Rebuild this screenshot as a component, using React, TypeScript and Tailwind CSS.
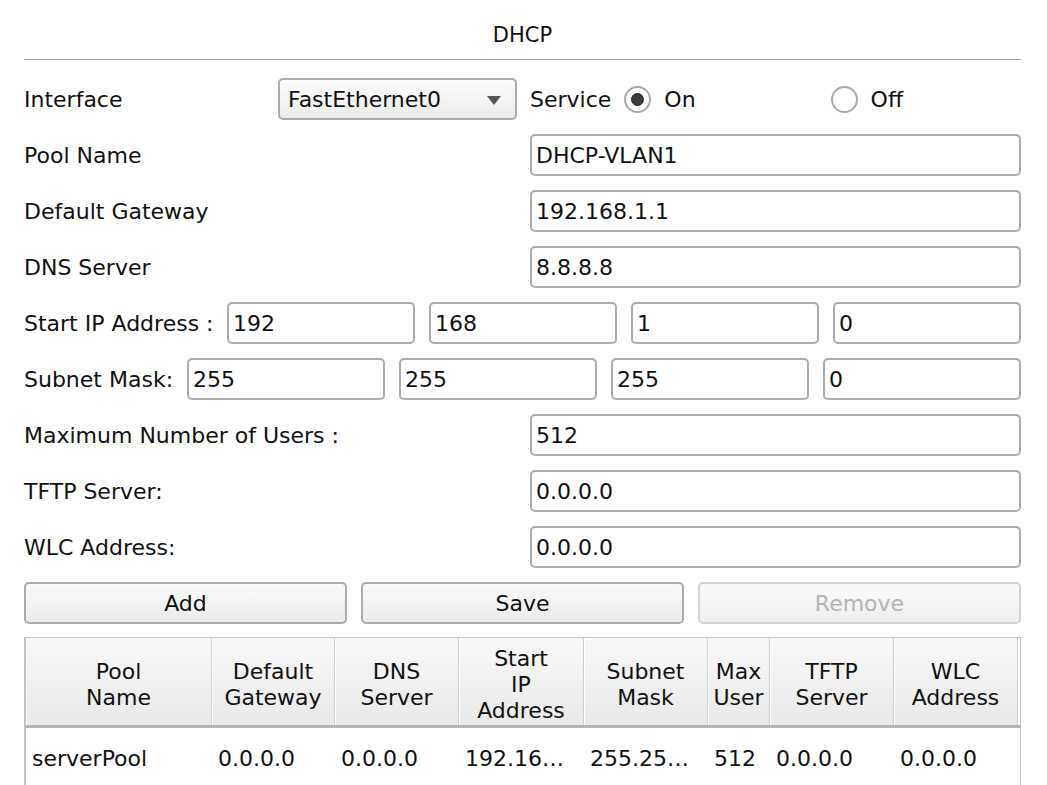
import React from "react";

const font = { fontFamily: '"DejaVu Sans", Verdana, sans-serif' };

function Field({ value, className = "" }: { value: string; className?: string }) {
  return (
    <div
      className={`h-[42px] border-2 border-[#ababab] rounded-[5px] bg-white flex items-center pl-[4px] pt-[2px] text-[#111] whitespace-nowrap overflow-hidden ${className}`}
    >
      {value}
    </div>
  );
}

function Radio({ checked }: { checked: boolean }) {
  return (
    <div className="w-[27px] h-[27px] rounded-full border-2 border-[#a9a9a9] bg-white flex items-center justify-center">
      {checked && <div className="w-[13px] h-[13px] rounded-full bg-[#3c3c3c] border border-[#222]" />}
    </div>
  );
}

function Row({ label, value }: { label: string; value: string }) {
  return (
    <div className="flex items-center h-[42px]">
      <div className="w-[506px] pt-[2px]">{label}</div>
      <Field value={value} className="flex-1" />
    </div>
  );
}

const cols = [
  { w: 186, h: ["Pool", "Name"] },
  { w: 123, h: ["Default", "Gateway"] },
  { w: 124, h: ["DNS", "Server"] },
  { w: 125, h: ["Start", "IP", "Address"] },
  { w: 124, h: ["Subnet", "Mask"] },
  { w: 62, h: ["Max", "User"] },
  { w: 124, h: ["TFTP", "Server"] },
  { w: 124, h: ["WLC", "Address"] },
];

const rowVals = ["serverPool", "0.0.0.0", "0.0.0.0", "192.16…", "255.25…", "512", "0.0.0.0", "0.0.0.0"];

export default function App() {
  return (
    <div className="w-[1047px] h-[785px] bg-white overflow-hidden text-[22px] text-[#111] leading-none pt-[1px]" style={font}>
      <div className="pl-[24px] pr-[26px]">
        <div className="h-[59px] flex items-center justify-center pt-[10px] border-b border-[#a3a3a3] text-[21px]">
          DHCP
        </div>
        <div className="mt-[18px] flex flex-col gap-[14px]">
          <div className="flex items-center h-[42px]">
            <div className="w-[254px] pt-[2px]">Interface</div>
            <div className="w-[239px] h-[42px] border-2 border-[#ababab] rounded-[5px] bg-gradient-to-b from-[#fbfbfb] to-[#ececec] flex items-center pl-[8px] pr-[14px] pt-[2px] justify-between">
              <span>FastEthernet0</span>
              <svg width="14" height="9" viewBox="0 0 14 9">
                <polygon points="0,0 14,0 7,9" fill="#555" />
              </svg>
            </div>
            <div className="ml-[13px] pt-[2px]">Service</div>
            <div className="ml-[13px]"><Radio checked /></div>
            <div className="ml-[13px] pt-[2px]">On</div>
            <div className="ml-[135px]"><Radio checked={false} /></div>
            <div className="ml-[13px] pt-[2px]">Off</div>
          </div>
          <Row label="Pool Name" value="DHCP-VLAN1" />
          <Row label="Default Gateway" value="192.168.1.1" />
          <Row label="DNS Server" value="8.8.8.8" />
          <div className="flex items-center h-[42px]">
            <div className="w-[203px] pt-[2px]">Start IP Address :</div>
            <div className="flex-1 grid grid-cols-4 gap-[14px]">
              <Field value="192" />
              <Field value="168" />
              <Field value="1" />
              <Field value="0" />
            </div>
          </div>
          <div className="flex items-center h-[42px]">
            <div className="w-[163px] pt-[2px]">Subnet Mask:</div>
            <div className="flex-1 grid grid-cols-4 gap-[14px]">
              <Field value="255" />
              <Field value="255" />
              <Field value="255" />
              <Field value="0" />
            </div>
          </div>
          <Row label="Maximum Number of Users :" value="512" />
          <Row label="TFTP Server:" value="0.0.0.0" />
          <Row label="WLC Address:" value="0.0.0.0" />
          <div className="grid grid-cols-3 gap-[14px]">
            <div className="h-[42px] border-2 border-[#ababab] rounded-[5px] bg-gradient-to-b from-[#fafafa] to-[#ebebeb] flex items-center justify-center pt-[2px]">Add</div>
            <div className="h-[42px] border-2 border-[#ababab] rounded-[5px] bg-gradient-to-b from-[#fafafa] to-[#ebebeb] flex items-center justify-center pt-[2px]">Save</div>
            <div className="h-[42px] border-2 border-[#d2d2d2] rounded-[5px] bg-gradient-to-b from-[#fafafa] to-[#efefef] flex items-center justify-center pt-[2px] text-[#b4b4b4]">Remove</div>
          </div>
        </div>
        <div className="mt-[13px] border-l-2 border-t border-r border-[#c2c2c2] h-[200px]">
          <div className="flex h-[90px] border-b-[3px] border-[#b5b5b5]">
            {cols.map((c, i) => (
              <div
                key={i}
                className="h-full shrink-0 bg-gradient-to-b from-[#f8f8f8] to-[#e9e9e9] border-r border-[#cfcfcf] flex flex-col items-center justify-center pt-[6px] leading-[26px] shadow-[inset_1px_0_0_#ffffff]"
                style={{ width: c.w }}
              >
                {c.h.map((t, j) => (
                  <div key={j}>{t}</div>
                ))}
              </div>
            ))}
          </div>
          <div className="flex h-[60px] items-center pt-[2px]">
            {cols.map((c, i) => (
              <div
                key={i}
                className="pl-[6px] shrink-0 whitespace-nowrap"
                style={{ width: c.w }}
              >
                {rowVals[i]}
              </div>
            ))}
          </div>
        </div>
      </div>
    </div>
  );
}
